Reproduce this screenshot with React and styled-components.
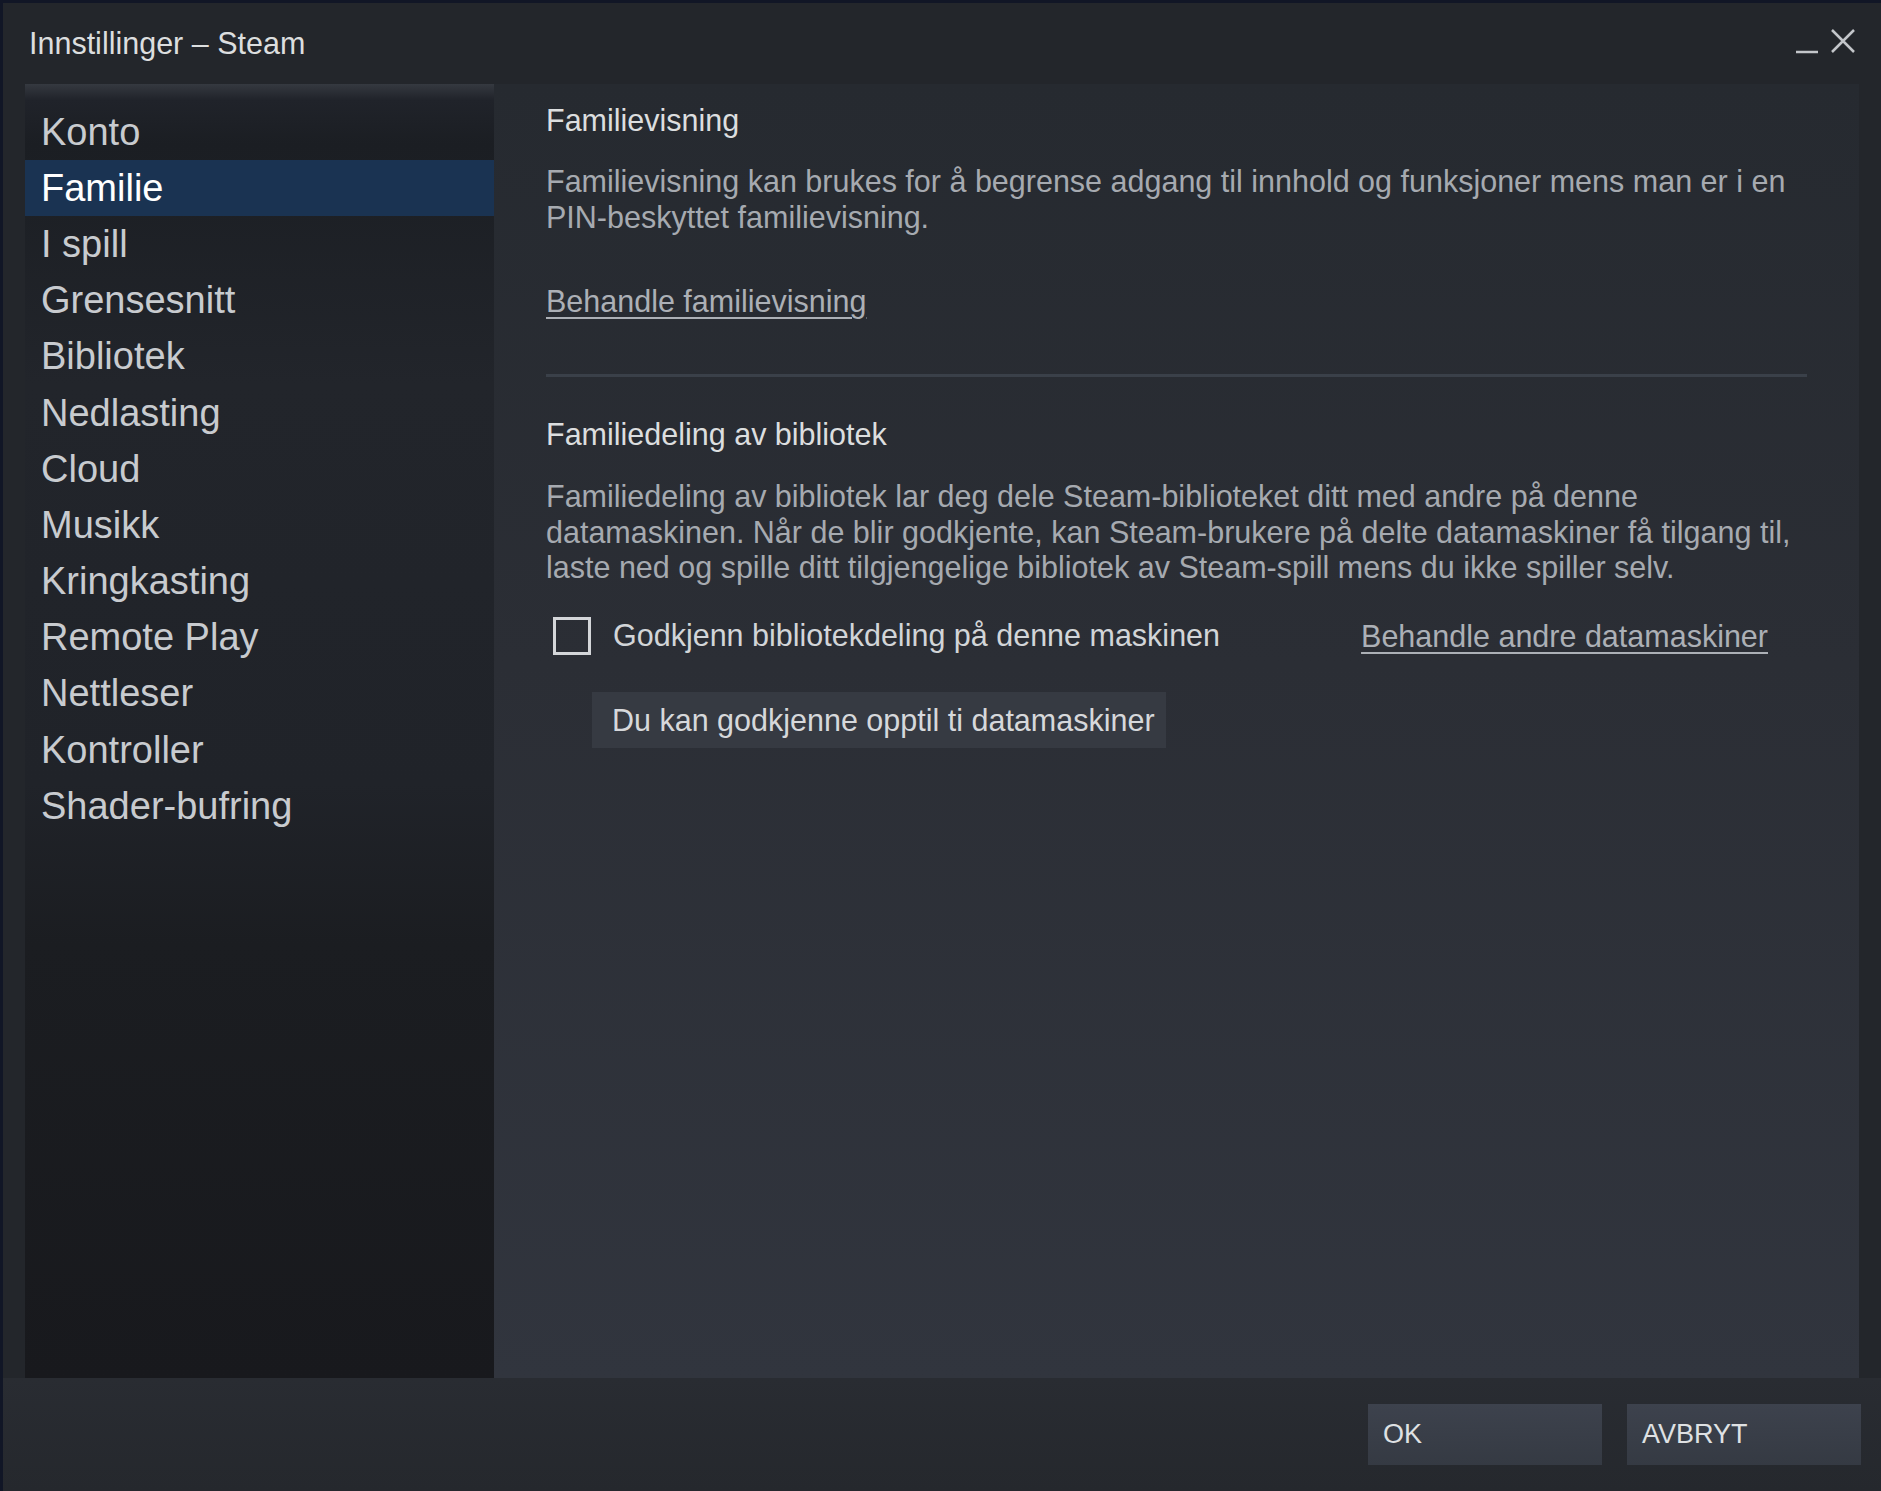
import React, { useState } from "react";
import styled, { createGlobalStyle } from "styled-components";

const GlobalStyle = createGlobalStyle`
  html, body {
    margin: 0;
    padding: 0;
    background: #111626;
  }
  body {
    font-family: "Liberation Sans", Arial, sans-serif;
    overflow: hidden;
  }
  * {
    box-sizing: border-box;
  }
`;

const Window = styled.div`
  display: flex;
  flex-direction: column;
  width: 1878px;
  height: 1488px;
  margin: 3px 0 0 3px;
  background: #23262b;
  color: #dcdedf;
`;

const TitleBar = styled.div`
  height: 81px;
  display: flex;
  align-items: center;
  padding: 0 20px 0 26px;
`;

const Title = styled.div`
  font-size: 30.5px;
  color: #dcdedf;
  flex: 1;
`;

const WindowButton = styled.button`
  background: none;
  border: none;
  padding: 0;
  width: 36px;
  height: 36px;
  display: flex;
  align-items: center;
  justify-content: center;
  cursor: pointer;
  margin-top: -6px;
`;

const Main = styled.div`
  flex: 1;
  display: flex;
  padding: 0 22px 0 22px;
  min-height: 0;
`;

const Sidebar = styled.div`
  width: 469px;
  background: linear-gradient(
    to bottom,
    #353940 0px,
    #20232a 16px,
    #1b1e23 60px,
    #22252b 300px,
    #202329 700px,
    #1b1d21 860px,
    #18191d 100%
  );
  padding-top: 20px;
`;

const NavItem = styled.div`
  height: 56.2px;
  display: flex;
  align-items: center;
  padding-left: 16px;
  font-size: 38px;
  color: ${(p) => (p.active ? "#ffffff" : "#c8cbcf")};
  background: ${(p) => (p.active ? "#1a3352" : "transparent")};
  cursor: pointer;
`;

const Content = styled.div`
  flex: 1;
  background: linear-gradient(to bottom, #262a30 0%, #2b2e35 45%, #31353e 100%);
  padding: 18px 52px 0 52px;
`;

const Heading = styled.div`
  font-size: 30.5px;
  line-height: 36px;
  color: #dcdedf;
  margin-top: ${(p) => p.top || 0}px;
`;

const Paragraph = styled.p`
  margin: ${(p) => p.top || 0}px 0 0 0;
  font-size: 30.5px;
  line-height: ${(p) => p.lh || 36}px;
  color: #a6aab0;
`;

const TextLink = styled.a`
  font-size: 30.5px;
  line-height: 36px;
  color: #acb0b6;
  text-decoration: underline;
  text-decoration-thickness: 2px;
  text-underline-offset: 5px;
  cursor: pointer;
`;

const LinkRow = styled.div`
  margin-top: 48px;
  height: 36px;
`;

const Separator = styled.div`
  margin-top: 55px;
  height: 3px;
  background: #3a4049;
`;

const CheckRow = styled.div`
  margin-top: 31px;
  display: flex;
  align-items: center;
  padding-left: 7px;
  padding-right: 39px;
`;

const CheckBox = styled.div`
  width: 38px;
  height: 38px;
  border: 3px solid #d4d6d9;
  background: transparent;
  cursor: pointer;
  flex-shrink: 0;
`;

const CheckLabel = styled.span`
  margin-left: 22px;
  font-size: 30.5px;
  color: #d2d5d8;
  flex: 1;
`;

const InfoBox = styled.div`
  display: inline-block;
  margin: 37px 0 0 46px;
  height: 56px;
  line-height: 56px;
  padding: 0 11px 0 20px;
  background: #363a42;
  font-size: 30.5px;
  color: #d6d8db;
`;

const Footer = styled.div`
  height: 113px;
  display: flex;
  justify-content: flex-end;
  align-items: center;
  gap: 25px;
  padding-right: 20px;
  background: linear-gradient(to bottom, #292c32, #25282d);
`;

const FooterButton = styled.button`
  width: 234px;
  height: 61px;
  border: none;
  text-align: left;
  padding-left: 15px;
  font-family: "Liberation Sans", Arial, sans-serif;
  font-size: 27px;
  color: #dfe1e3;
  background: linear-gradient(to bottom, #3d424d, #353a43);
  cursor: pointer;
`;

const navItems = [
  "Konto",
  "Familie",
  "I spill",
  "Grensesnitt",
  "Bibliotek",
  "Nedlasting",
  "Cloud",
  "Musikk",
  "Kringkasting",
  "Remote Play",
  "Nettleser",
  "Kontroller",
  "Shader-bufring",
];

export default function App() {
  const [active, setActive] = useState("Familie");
  const [checked, setChecked] = useState(false);

  return (
    <>
      <GlobalStyle />
      <Window>
        <TitleBar>
          <Title>Innstillinger – Steam</Title>
          <WindowButton aria-label="minimer">
            <svg width="26" height="30" viewBox="0 0 26 30">
              <line x1="2" y1="26" x2="24" y2="26" stroke="#c3c6ca" strokeWidth="2.5" />
            </svg>
          </WindowButton>
          <WindowButton aria-label="lukk">
            <svg width="28" height="28" viewBox="0 0 28 28">
              <path d="M3 3 L25 25 M25 3 L3 25" stroke="#c3c6ca" strokeWidth="2.5" fill="none" />
            </svg>
          </WindowButton>
        </TitleBar>

        <Main>
          <Sidebar>
            {navItems.map((item) => (
              <NavItem key={item} active={item === active} onClick={() => setActive(item)}>
                {item}
              </NavItem>
            ))}
          </Sidebar>

          <Content>
            <Heading>Familievisning</Heading>
            <Paragraph top={25}>
              Familievisning kan brukes for å begrense adgang til innhold og funksjoner mens man er i en
              <br />
              PIN-beskyttet familievisning.
            </Paragraph>
            <LinkRow>
              <TextLink>Behandle familievisning</TextLink>
            </LinkRow>

            <Separator />

            <Heading top={39}>Familiedeling av bibliotek</Heading>
            <Paragraph top={27} lh={35.5}>
              Familiedeling av bibliotek lar deg dele Steam-biblioteket ditt med andre på denne
              <br />
              datamaskinen. Når de blir godkjente, kan Steam-brukere på delte datamaskiner få tilgang til,
              <br />
              laste ned og spille ditt tilgjengelige bibliotek av Steam-spill mens du ikke spiller selv.
            </Paragraph>

            <CheckRow>
              <CheckBox onClick={() => setChecked(!checked)}>
                {checked && (
                  <svg width="32" height="32" viewBox="0 0 32 32">
                    <path d="M6 16 L13 23 L26 9" stroke="#d4d6d9" strokeWidth="3" fill="none" />
                  </svg>
                )}
              </CheckBox>
              <CheckLabel>Godkjenn bibliotekdeling på denne maskinen</CheckLabel>
              <TextLink>Behandle andre datamaskiner</TextLink>
            </CheckRow>

            <InfoBox>Du kan godkjenne opptil ti datamaskiner</InfoBox>
          </Content>
        </Main>

        <Footer>
          <FooterButton>OK</FooterButton>
          <FooterButton>AVBRYT</FooterButton>
        </Footer>
      </Window>
    </>
  );
}
